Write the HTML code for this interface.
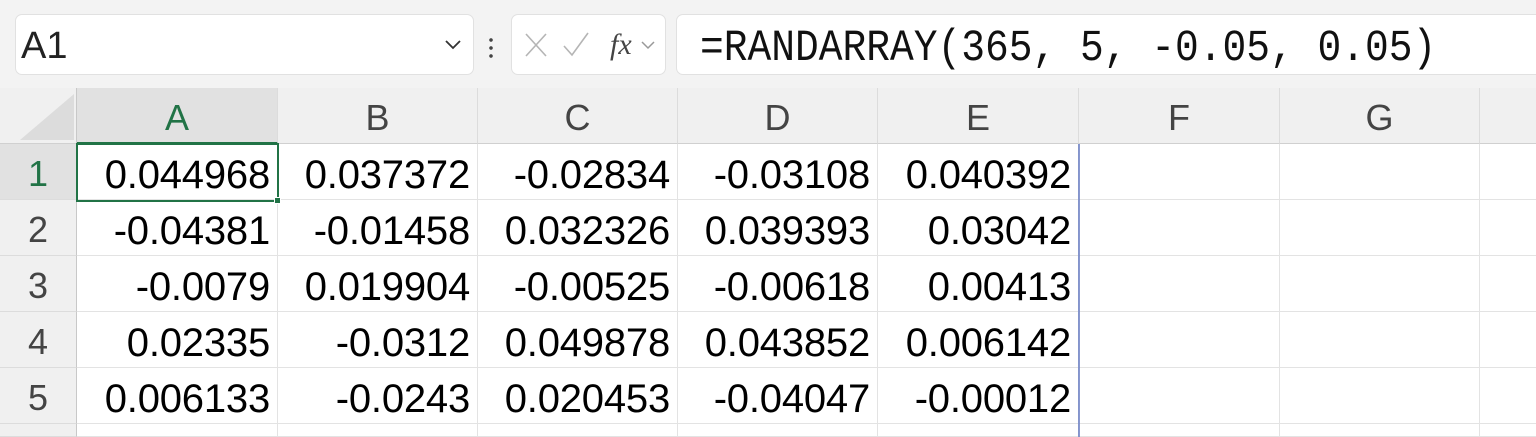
<!DOCTYPE html>
<html><head><meta charset="utf-8"><style>
*{margin:0;padding:0;box-sizing:border-box}
html{width:1536px;height:437px;overflow:hidden}
body{width:1536px;height:437px;overflow:hidden;background:#f3f3f3;font-family:"Liberation Sans",sans-serif;position:relative}
.box{position:absolute;background:#fff;border:1px solid #e1e1e1;border-radius:7px}
.hdr{position:absolute;top:88px;height:56px;background:#f0f0f0;border-right:1px solid #dcdcdc;border-bottom:1px solid #d0d0d0;text-align:center;font-size:36px;line-height:60px;color:#444}
.rh{position:absolute;left:0;width:77px;height:56px;background:#f0f0f0;border-bottom:1px solid #dcdcdc;border-right:1px solid #c8c8c8;text-align:center;font-size:36px;line-height:60px;color:#444}
.grid{position:absolute;left:77px;top:144px;width:1459px;height:293px;background:#fff}
.c{position:absolute;height:56px;border-right:1px solid #e3e3e3;border-bottom:1px solid #e3e3e3;text-align:right;padding-right:7px;font-size:40px;line-height:62px;color:#000;letter-spacing:-0.2px;overflow:hidden}
</style></head><body>
<div class="box" style="left:15px;top:14px;width:459px;height:61px"></div>
<div style="position:absolute;left:21px;top:25px;font-size:38px;color:#222">A1</div>
<svg style="position:absolute;left:444px;top:38px" width="18" height="12"><path d="M2 3 L9 10 L16 3" fill="none" stroke="#333" stroke-width="1.8"/></svg>
<div style="position:absolute;left:489px;top:36px;width:4px;height:22px;background:radial-gradient(circle,#444 1.6px,transparent 2px) 0 0/4px 8px repeat-y"></div>
<div class="box" style="left:511px;top:14px;width:155px;height:61px"></div>
<svg style="position:absolute;left:518px;top:26px" width="145" height="40">
<path d="M8 8 L28 30 M28 8 L8 30" stroke="#b5b5b5" stroke-width="1.6" fill="none"/>
<path d="M46 20 L54 29 L70 7" stroke="#b5b5b5" stroke-width="1.6" fill="none"/>
<text x="92" y="28" font-family="Liberation Serif" font-style="italic" font-size="30" fill="#444">fx</text>
<path d="M124 16 L130 22 L136 16" stroke="#999" stroke-width="1.5" fill="none"/>
</svg>
<div class="box" style="left:676px;top:14px;width:880px;height:61px"></div>
<div style="position:absolute;left:700px;top:23px;font-family:'Liberation Mono',monospace;font-size:39.6px;color:#111;transform:scaleY(1.12);transform-origin:top left">=RANDARRAY(365, 5, -0.05, 0.05)</div>
<div style="position:absolute;left:0;top:88px;width:77px;height:56px;background:#f0f0f0;border-right:1px solid #c8c8c8;border-bottom:1px solid #d0d0d0"></div>
<svg style="position:absolute;left:18px;top:92px" width="58" height="50"><path d="M56 2 L56 48 L2 48 Z" fill="#dcdcdc"/></svg>
<div class="hdr" style="left:77px;width:201px;background:#e1e1e1;color:#217346;border-bottom:2px solid #217346">A</div>
<div class="hdr" style="left:278px;width:200px">B</div>
<div class="hdr" style="left:478px;width:200px">C</div>
<div class="hdr" style="left:678px;width:200px">D</div>
<div class="hdr" style="left:878px;width:201px">E</div>
<div class="hdr" style="left:1079px;width:201px">F</div>
<div class="hdr" style="left:1280px;width:200px">G</div>
<div class="hdr" style="left:1480px;width:60px"></div>
<div class="rh" style="top:144px;background:#e1e1e1;color:#217346">1</div>
<div class="rh" style="top:200px">2</div>
<div class="rh" style="top:256px">3</div>
<div class="rh" style="top:312px">4</div>
<div class="rh" style="top:368px">5</div>
<div class="rh" style="top:424px;height:13px"></div>
<div class="grid"></div>
<div id="cells"></div>
<script>
(function(){
var d=[["0.044968","0.037372","-0.02834","-0.03108","0.040392","",""],
["-0.04381","-0.01458","0.032326","0.039393","0.03042","",""],
["-0.0079","0.019904","-0.00525","-0.00618","0.00413","",""],
["0.02335","-0.0312","0.049878","0.043852","0.006142","",""],
["0.006133","-0.0243","0.020453","-0.04047","-0.00012","",""],
["","","","","","",""]];
var xs=[77,278,478,678,878,1079,1280,1480,1540];var h="";
for(var r=0;r<6;r++)for(var c=0;c<8;c++){var ty=144+56*r;var hh=r==5?13:56;h+='<div class="c" style="left:'+xs[c]+'px;top:'+ty+'px;height:'+hh+'px;width:'+((xs[c+1]||1600)-xs[c])+'px">'+((d[r]&&d[r][c])||"")+'</div>';}
document.getElementById("cells").innerHTML=h;
})();
</script>
<div style="position:absolute;left:1078px;top:144px;width:2px;height:293px;background:#6b7fc4;opacity:.8"></div>
<div style="position:absolute;left:76px;top:143px;width:203px;height:59px;border:2px solid #217346"></div>
<div style="position:absolute;left:274px;top:197px;width:7px;height:7px;background:#217346;border:1px solid #fff"></div>
</body></html>
